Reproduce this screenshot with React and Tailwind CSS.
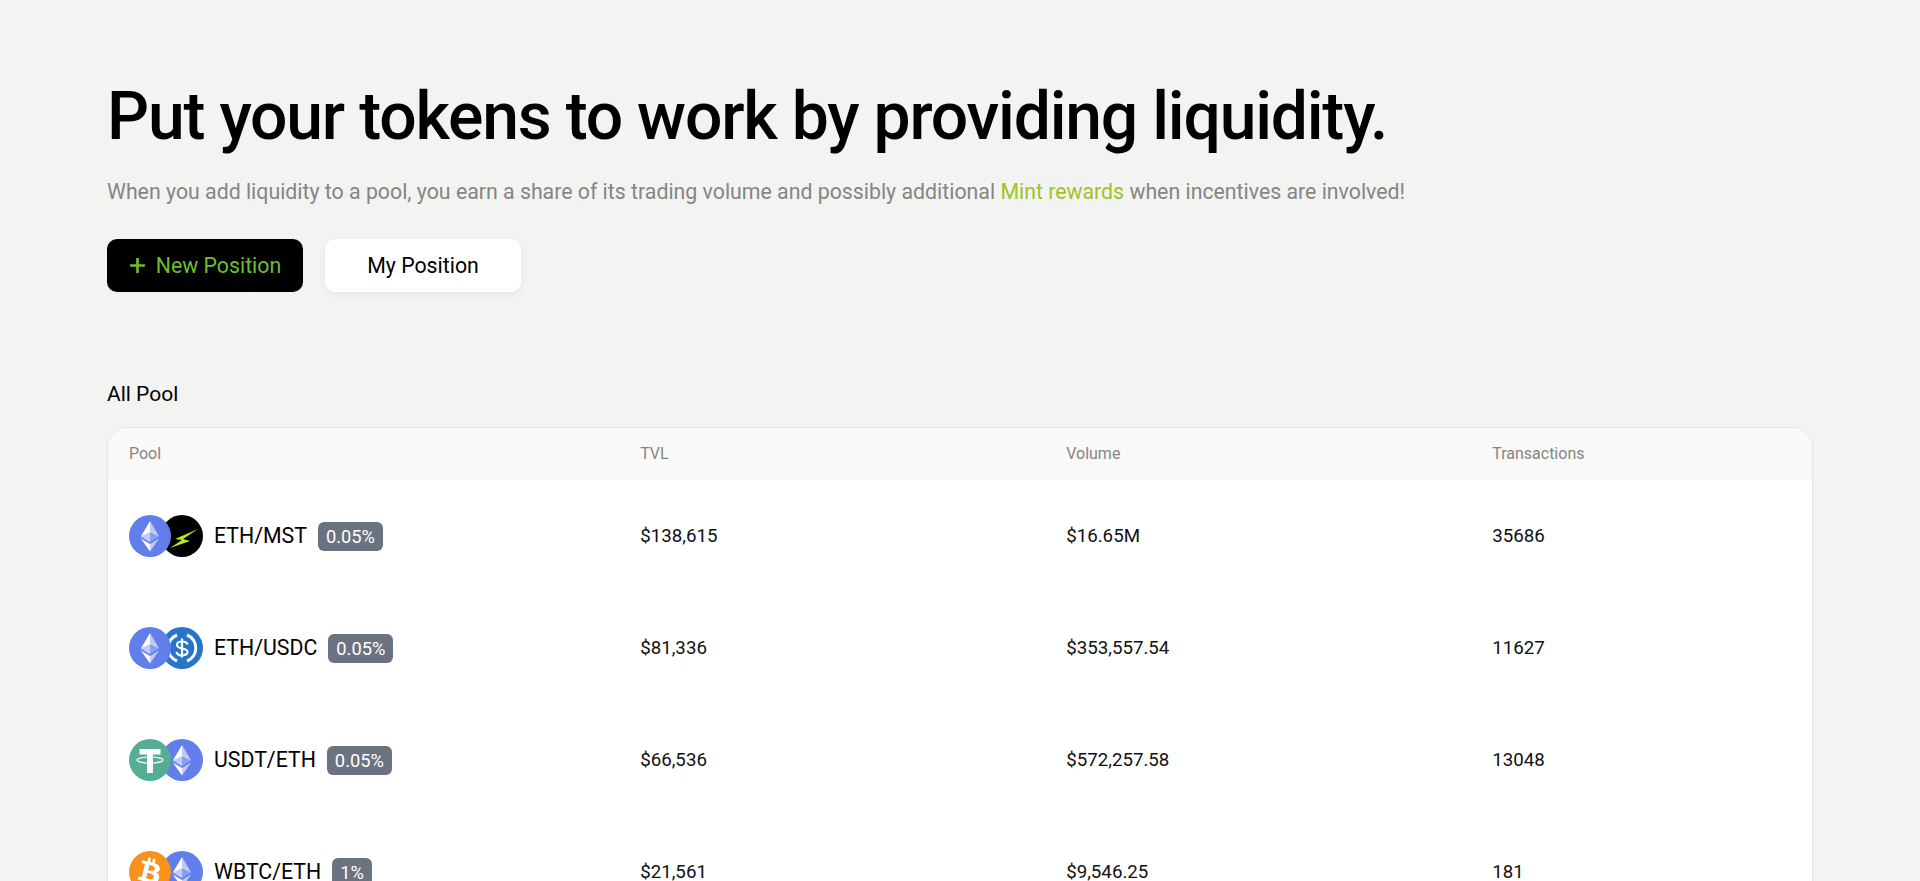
import { FaBtc } from 'react-icons/fa';

const EthIcon = () => (
    <svg viewBox="0 0 42 42" className="h-[42px] w-[42px] shrink-0">
        <circle cx="21" cy="21" r="21" fill="#627eea" />
        <path d="M21 6v11.5l9.2 4.1z" fill="#fff" fillOpacity="0.6" />
        <path d="M21 6l-9.2 15.6 9.2-4.1z" fill="#fff" />
        <path d="M21 29v7.4l9.2-12.8z" fill="#fff" fillOpacity="0.6" />
        <path d="M21 36.4V29l-9.2-5.4z" fill="#fff" />
        <path d="M21 27.2l9.2-5.6L21 17.5z" fill="#fff" fillOpacity="0.25" />
        <path d="M11.8 21.6l9.2 5.6v-9.7z" fill="#fff" fillOpacity="0.6" />
    </svg>
);

const MstIcon = () => (
    <svg viewBox="0 0 42 42" className="h-[42px] w-[42px] shrink-0">
        <circle cx="21" cy="21" r="21" fill="#000" />
        <path d="M37 14L14 24l7 1L9 33l20-7-7-2z" fill="#b5ec1f" />
    </svg>
);

const UsdcIcon = () => (
    <svg viewBox="0 0 42 42" className="h-[42px] w-[42px] shrink-0">
        <circle cx="21" cy="21" r="21" fill="#2775ca" />
        <path d="M16 8a14 14 0 0 0 0 26" fill="none" stroke="#fff" strokeWidth="3" />
        <path d="M26 8a14 14 0 0 1 0 26" fill="none" stroke="#fff" strokeWidth="3" />
        <path d="M26.500 17.500c-.4-2-2.500-3-5.500-3-2.900 0-5 1.300-5 3.400 0 4.800 10.500 2.400 10.500 6.900 0 2.200-2.300 3.500-5.500 3.500-3 0-5.200-1.200-5.500-3.500M21 11.500v19" fill="none" stroke="#fff" strokeWidth="2.200" />
    </svg>
);

const UsdtIcon = () => (
    <svg viewBox="0 0 42 42" className="h-[42px] w-[42px] shrink-0">
        <circle cx="21" cy="21" r="21" fill="#53ae94" />
        <path d="M10.500 10h21v5.500H24V34h-6V15.500h-7.500z" fill="#fff" />
        <ellipse cx="21" cy="21" rx="13" ry="3" fill="none" stroke="#fff" strokeWidth="1.200" />
    </svg>
);

const BtcIcon = () => (
    <div className="flex h-[42px] w-[42px] shrink-0 items-center justify-center rounded-full bg-[#f7931a] text-white">
        <FaBtc className="h-[28px] w-[28px] rotate-[14deg]" />
    </div>
);

const pools = [
    { id: 1, left: EthIcon, right: MstIcon, name: 'ETH/MST', fee: '0.05%', tvl: '$138,615', volume: '$16.65M', txs: '35686' },
    { id: 2, left: EthIcon, right: UsdcIcon, name: 'ETH/USDC', fee: '0.05%', tvl: '$81,336', volume: '$353,557.54', txs: '11627' },
    { id: 3, left: UsdtIcon, right: EthIcon, name: 'USDT/ETH', fee: '0.05%', tvl: '$66,536', volume: '$572,257.58', txs: '13048' },
    { id: 4, left: BtcIcon, right: EthIcon, name: 'WBTC/ETH', fee: '1%', tvl: '$21,561', volume: '$9,546.25', txs: '181' },
];

const App = () => {
    return (
        <div className="h-screen overflow-hidden bg-[#f3f3f2] px-[107px] pt-[72px] font-['Roboto',sans-serif]">
            <h1 className="text-[66px] leading-[90px] font-medium text-black tracking-[-1.2px]">
                Put your tokens to work by providing liquidity.
            </h1>
            <p className="mt-[15px] text-[21.3px] leading-[30px] text-[#858585]">
                When you add liquidity to a pool, you earn a share of its trading volume and possibly additional{' '}
                <span className="text-[#9dc41f]">Mint rewards</span> when incentives are involved!
            </p>

            <div className="mt-[32px] flex gap-[22px]">
                <button className="flex h-[53px] w-[196px] items-center justify-center gap-[10px] rounded-[10px] bg-black text-[21.3px] text-[#6fbe2c]">
                    <svg viewBox="0 0 16 16" className="h-[17px] w-[17px]" fill="none" stroke="currentColor" strokeWidth="2.500">
                        <path d="M8 1v14M1 8h14" />
                    </svg>
                    New Position
                </button>
                <button className="h-[53px] w-[196px] rounded-[10px] bg-white text-[21.3px] text-black shadow-[0_2px_8px_rgba(0,0,0,0.06)]">
                    My Position
                </button>
            </div>

            <h2 className="mt-[87px] text-[21px] leading-[30px] text-black">All Pool</h2>

            <div className="mt-[18px] overflow-hidden rounded-[20px] border border-[#e4e4e2] bg-white">
                <div className="grid h-[52px] grid-cols-[30%_25%_25%_20%] items-center bg-[#f9f9f7] text-[16px] text-[#858585]">
                    <div className="px-[21px]">Pool</div>
                    <div className="px-[21px]">TVL</div>
                    <div className="px-[21px]">Volume</div>
                    <div className="px-[21px]">Transactions</div>
                </div>
                {pools.map((pool) => (
                    <div key={pool.id} className="grid h-[112px] grid-cols-[30%_25%_25%_20%] items-center text-[18.7px] text-[#111]">
                        <div className="flex items-center px-[21px]">
                            <div className="flex shrink-0">
                                <div className="relative z-10"><pool.left /></div>
                                <div className="-ml-[10px]"><pool.right /></div>
                            </div>
                            <span className="ml-[11px] text-[21.3px] text-black">{pool.name}</span>
                            <span className="ml-[11px] rounded-[6px] bg-[#6b7280] px-2 py-[2px] text-[18.3px] leading-[25px] text-white">{pool.fee}</span>
                        </div>
                        <div className="px-[21px]">{pool.tvl}</div>
                        <div className="px-[21px]">{pool.volume}</div>
                        <div className="px-[21px]">{pool.txs}</div>
                    </div>
                ))}
            </div>
        </div>
    );
};

export default App;
